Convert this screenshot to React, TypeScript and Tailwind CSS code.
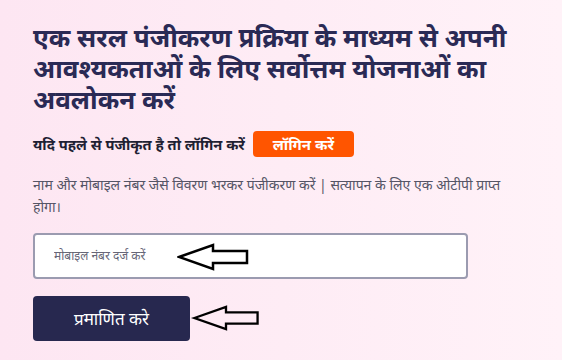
const Arrow = ({ className }: { className: string }) => (
  <svg viewBox="0 0 72 28" className={className} fill="none">
    <path d="M2 14 L36 2 L36 8 L70 8 L70 20 L36 20 L36 26 Z" stroke="#000" strokeWidth="2.5" strokeLinejoin="miter" />
  </svg>
);

const App = () => {
  return (
    <div className="w-[562px] h-[360px] overflow-hidden bg-gradient-to-r from-[#fde6f2] to-[#fff2f8] px-[33px] pt-[22px] font-['Noto_Sans',_'Lohit_Devanagari',_sans-serif]">
      <h1 className="text-[26px] leading-[31px] font-bold text-[#2a2a55] w-[490px]">
        एक सरल पंजीकरण प्रक्रिया के माध्यम से अपनी आवश्यकताओं के लिए सर्वोत्तम योजनाओं का अवलोकन करें
      </h1>

      <div className="flex items-center gap-2 mt-[16px]">
        <p className="text-[14.7px] font-bold text-[#1f1f33]">यदि पहले से पंजीकृत है तो लॉगिन करें</p>
        <button className="w-[101px] h-[26px] rounded bg-[#ff5500] text-white text-[15px] font-bold">
          लॉगिन करें
        </button>
      </div>

      <p className="mt-[17px] text-[14px] leading-[22px] text-[#555566] w-[490px]">
        नाम और मोबाइल नंबर जैसे विवरण भरकर पंजीकरण करें | सत्यापन के लिए एक ओटीपी प्राप्त होगा।
      </p>

      <div className="relative mt-[15px] w-[435px] h-[46px] rounded border-2 border-[#9b9bb0] bg-white flex items-center pl-[19px]">
        <input
          placeholder="मोबाइल नंबर दर्ज करें"
          className="w-full bg-transparent outline-none text-[12px] placeholder:text-[#666677]"
        />
        <Arrow className="absolute left-[142px] top-[8px] w-[72px] h-[28px]" />
      </div>

      <div className="relative mt-[17px]">
        <button className="w-[157px] h-[45px] rounded bg-[#27284f] text-white text-[17px]">
          प्रमाणित करे
        </button>
        <Arrow className="absolute left-[156px] top-[9px] w-[74px] h-[26px]" />
      </div>
    </div>
  );
};

export default App;
